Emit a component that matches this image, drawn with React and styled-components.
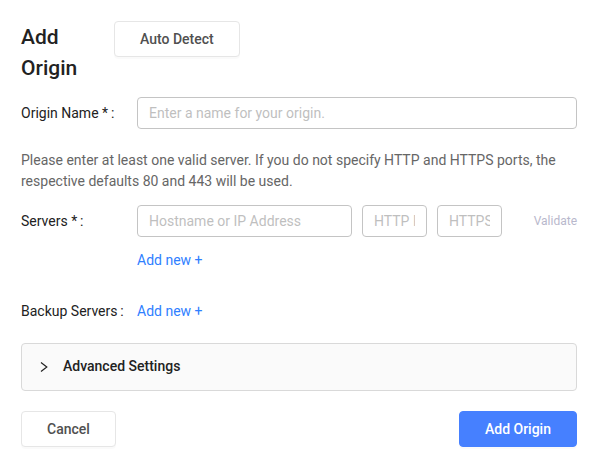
import React from 'react';
import styled, { createGlobalStyle } from 'styled-components';

const Global = createGlobalStyle`
  * { box-sizing: border-box; }
  body { margin: 0; background: #fff; color: #222; font: 14px/21px Roboto, sans-serif; }
  button, input { font: inherit; }
`;

const Form = styled.form`
  padding: 21px 20px 10px 21px;
`;

const Header = styled.header`
  display: flex;
  align-items: flex-start;
  gap: 16px;
`;

const Title = styled.h1`
  flex: 0 0 77px;
  margin: 0;
  padding-top: 1px;
  font-size: 21px;
  line-height: 31px;
  font-weight: 500;
`;

const Button = styled.button`
  height: 36px;
  padding: 0 25px;
  border: 1px solid ${(p) => (p.$primary ? '#4680ff' : '#e6e6e6')};
  border-radius: 4px;
  background: ${(p) => (p.$primary ? '#4680ff' : '#fff')};
  box-shadow: 0 2px 0 rgba(0, 0, 0, 0.02);
  color: ${(p) => (p.$primary ? '#fff' : '#505050')};
  font-weight: 500;
  cursor: pointer;
`;

const Row = styled.div`
  display: grid;
  grid-template-columns: 116px minmax(0, 1fr);
  align-items: center;
  margin-top: ${(p) => p.$gap}px;
`;

const Label = styled.label`
  white-space: nowrap;
`;

const Input = styled.input`
  width: 100%;
  min-width: 0;
  height: 32px;
  padding: 0 11px;
  border: 1px solid #c4c4c4;
  border-radius: 4px;
  background: #fff;
  color: #222;
  outline: none;
  &::placeholder { color: #bfbfbf; opacity: 1; }
`;

const Note = styled.p`
  margin: 21px 0 13px;
  color: #666;
`;

const ServerFields = styled.div`
  display: grid;
  grid-template-columns: minmax(0, 1fr) 65px 65px 65px;
  align-items: center;
  gap: 10px;
`;

const TextButton = styled.button`
  padding: 0;
  border: 0;
  background: none;
  color: #2f80ff;
  text-align: left;
  cursor: pointer;
`;

const Validate = styled(TextButton)`
  color: #b8b8cc;
  font-size: 12px;
  text-align: right;
`;

const Panel = styled.button`
  display: flex;
  align-items: center;
  gap: 13px;
  width: 100%;
  height: 48px;
  margin-top: 21px;
  padding: 0 16px 2px;
  border: 1px solid #d9d9d9;
  border-radius: 4px;
  background: #fafafa;
  color: #222;
  font-weight: 500;
  cursor: pointer;
`;

const Footer = styled.footer`
  display: flex;
  justify-content: space-between;
  margin-top: 20px;
`;

export default function App() {
  return (
    <>
      <Global />
      <Form onSubmit={(e) => e.preventDefault()}>
        <Header>
          <Title>Add Origin</Title>
          <Button type="button">Auto Detect</Button>
        </Header>
        <Row $gap={13}>
          <Label htmlFor="name">Origin Name *&thinsp;:</Label>
          <Input id="name" placeholder="Enter a name for your origin." />
        </Row>
        <Note>
          Please enter at least one valid server. If you do not specify HTTP and HTTPS ports, the respective defaults 80
          and 443 will be used.
        </Note>
        <Row $gap={0}>
          <Label htmlFor="host">Servers *&thinsp;:</Label>
          <ServerFields>
            <Input id="host" placeholder="Hostname or IP Address" />
            <Input aria-label="HTTP port" placeholder="HTTP Port" />
            <Input aria-label="HTTPS port" placeholder="HTTPS Port" />
            <Validate type="button" disabled>Validate</Validate>
          </ServerFields>
        </Row>
        <Row $gap={13}>
          <span />
          <TextButton type="button">Add new +</TextButton>
        </Row>
        <Row $gap={30}>
          <Label as="span" id="backup">Backup Servers&thinsp;:</Label>
          <TextButton type="button" aria-describedby="backup">Add new +</TextButton>
        </Row>
        <Panel type="button" aria-expanded="false">
          <svg width="12" height="12" viewBox="0 0 12 12" fill="none" stroke="#222" strokeWidth="1.2" aria-hidden="true">
            <path d="M3 2.5 8.8 7 3 11.5" />
          </svg>
          Advanced Settings
        </Panel>
        <Footer>
          <Button type="button">Cancel</Button>
          <Button type="submit" $primary>Add Origin</Button>
        </Footer>
      </Form>
    </>
  );
}
